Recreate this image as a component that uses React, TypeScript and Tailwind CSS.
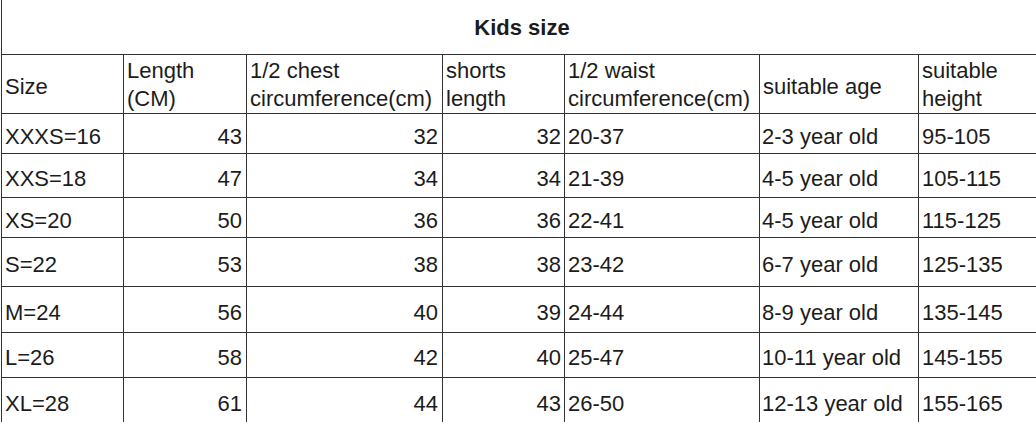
import React from "react";

const rows: [string, string, string, string, string, string, string, number][] = [
  ["XXXS=16", "43", "32", "32", "20-37", "2-3 year old", "95-105", 40],
  ["XXS=18", "47", "34", "34", "21-39", "4-5 year old", "105-115", 44],
  ["XS=20", "50", "36", "36", "22-41", "4-5 year old", "115-125", 40],
  ["S=22", "53", "38", "38", "23-42", "6-7 year old", "125-135", 49],
  ["M=24", "56", "40", "39", "24-44", "8-9 year old", "135-145", 46],
  ["L=26", "58", "42", "40", "25-47", "10-11 year old", "145-155", 45],
  ["XL=28", "61", "44", "43", "26-50", "12-13 year old", "155-165", 45],
];

const heights = ["h-[40px]", "h-[44px]", "h-[40px]", "h-[49px]", "h-[46px]", "h-[45px]", "h-[45px]"];

export default function App() {
  return (
    <div
      className="w-[1036px] h-[422px] bg-white text-[#1c1c1c] overflow-hidden"
      style={{ fontFamily: '"Liberation Sans", Arial, sans-serif' }}
    >
      <div className="ml-[1px] border-l border-[#333]">
        <div className="h-[55px] border-b border-[#333] flex items-center justify-center pl-[6px] pt-[1px] text-[22px] font-bold">
          Kids size
        </div>
        <div className="grid grid-cols-[122px_123px_196px_122px_195px_159px_1fr] text-[22px]">
          <div className="h-[59px] border-r border-b border-[#333] flex items-center pl-[3px] pt-[5px]">Size</div>
          <div className="h-[59px] border-r border-b border-[#333] flex items-center pl-[3px] pt-[1px] leading-[28px]">
            <div>
              Length
              <br />
              (CM)
            </div>
          </div>
          <div className="h-[59px] border-r border-b border-[#333] flex items-center pl-[3px] pt-[1px] leading-[28px] whitespace-nowrap">
            <div>
              1/2 chest
              <br />
              circumference(cm)
            </div>
          </div>
          <div className="h-[59px] border-r border-b border-[#333] flex items-center pl-[3px] pt-[1px] leading-[28px]">
            <div>
              shorts
              <br />
              length
            </div>
          </div>
          <div className="h-[59px] border-r border-b border-[#333] flex items-center pl-[3px] pt-[1px] leading-[28px] whitespace-nowrap">
            <div>
              1/2 waist
              <br />
              circumference(cm)
            </div>
          </div>
          <div className="h-[59px] border-r border-b border-[#333] flex items-center pl-[3px] pt-[5px]">suitable age</div>
          <div className="h-[59px] border-b border-[#333] flex items-center pl-[3px] pt-[1px] leading-[28px]">
            <div>
              suitable
              <br />
              height
            </div>
          </div>
          {rows.map((r, i) => {
            const h = heights[i];
            const last = i === rows.length - 1;
            const b = last ? "" : "border-b";
            return (
              <React.Fragment key={r[0]}>
                <div className={`${h} ${b} border-r border-[#333] flex items-center pl-[3px] pt-[5px] whitespace-nowrap`}>{r[0]}</div>
                <div className={`${h} ${b} border-r border-[#333] flex items-center justify-end pr-[4px] pt-[5px]`}>{r[1]}</div>
                <div className={`${h} ${b} border-r border-[#333] flex items-center justify-end pr-[4px] pt-[5px]`}>{r[2]}</div>
                <div className={`${h} ${b} border-r border-[#333] flex items-center justify-end pr-[3px] pt-[5px]`}>{r[3]}</div>
                <div className={`${h} ${b} border-r border-[#333] flex items-center pl-[3px] pt-[5px]`}>{r[4]}</div>
                <div className={`${h} ${b} border-r border-[#333] flex items-center pl-[2px] pt-[5px] whitespace-nowrap`}>{r[5]}</div>
                <div className={`${h} ${b} border-[#333] flex items-center pl-[3px] pt-[5px]`}>{r[6]}</div>
              </React.Fragment>
            );
          })}
        </div>
      </div>
    </div>
  );
}
